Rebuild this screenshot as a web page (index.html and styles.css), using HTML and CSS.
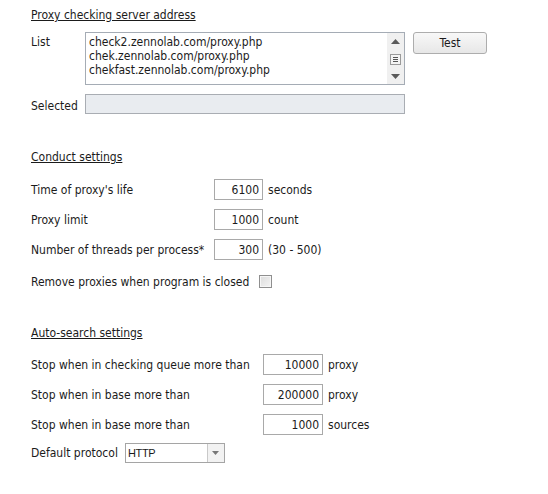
FILE: index.html
```html
<!DOCTYPE html>
<html lang="en">
<head>
    <meta charset="UTF-8">
    <title>Proxy settings</title>
<link rel="stylesheet" href="styles.css">
</head>
<body>
    <div class="sec sec1">
        <div class="head">Proxy checking server address</div>
        <div class="row-list">
            <span class="lbl lbl1">List</span>
            <div class="listbox">
                <div class="items">
                    <div>check2.zennolab.com/proxy.php</div>
                    <div>chek.zennolab.com/proxy.php</div>
                    <div>chekfast.zennolab.com/proxy.php</div>
                </div>
                <div class="sbar">
                    <svg width="9" height="5" viewBox="0 0 9 5"><path d="M0 5 L4.5 0 L9 5 Z" fill="#5a5a5a"/></svg>
                    <div class="thumb"><i></i><i></i><i></i></div>
                    <svg width="9" height="5" viewBox="0 0 9 5"><path d="M0 0 L4.5 5 L9 0 Z" fill="#5a5a5a"/></svg>
                </div>
            </div>
            <button class="btn">Test</button>
        </div>
        <div class="row-sel">
            <span class="lbl lbl1">Selected</span>
            <div class="selbox"></div>
        </div>
    </div>

    <div class="sec sec2">
        <div class="head">Conduct settings</div>
        <div class="row">
            <span class="lbl lbl2">Time of proxy's life</span>
            <div class="num n2">6100</div>
            <span class="unit">seconds</span>
        </div>
        <div class="row">
            <span class="lbl lbl2">Proxy limit</span>
            <div class="num n2">1000</div>
            <span class="unit">count</span>
        </div>
        <div class="row">
            <span class="lbl lbl2">Number of threads per process*</span>
            <div class="num n2">300</div>
            <span class="unit">(30 - 500)</span>
        </div>
        <div class="row row-chk">
            <span class="lbl">Remove proxies when program is closed</span>
            <span class="chk"></span>
        </div>
    </div>

    <div class="sec sec3">
        <div class="head">Auto-search settings</div>
        <div class="row">
            <span class="lbl lbl3">Stop when in checking queue more than</span>
            <div class="num n3">10000</div>
            <span class="unit">proxy</span>
        </div>
        <div class="row">
            <span class="lbl lbl3">Stop when in base more than</span>
            <div class="num n3">200000</div>
            <span class="unit">proxy</span>
        </div>
        <div class="row">
            <span class="lbl lbl3">Stop when in base more than</span>
            <div class="num n3">1000</div>
            <span class="unit">sources</span>
        </div>
        <div class="row row-proto">
            <span class="lbl">Default protocol</span>
            <div class="combo">
                <span class="cval">HTTP</span>
                <span class="cbtn"><svg width="7" height="4" viewBox="0 0 7 4"><path d="M0 0 L3.5 4 L7 0 Z" fill="#777"/></svg></span>
            </div>
        </div>
    </div>
</body>
</html>
```

FILE: styles.css
```css
*{
    margin:0;
    padding:0;
    box-sizing:border-box;
}
body{
    width:548px;
    height:494px;
    background:#fff;
    color:#1b1b1b;
    font-family:"DejaVu Sans Condensed","DejaVu Sans",sans-serif;
    font-size:12px;
    line-height:14px;
    padding-left:31px;
}
.head{
    text-decoration:underline;
    height:14px;
}
.sec1{
    padding-top:8px;
}
.row-list{
    display:flex;
    align-items:flex-start;
    margin-top:10px;
}
.lbl{
    white-space:nowrap;
}
.lbl1{
    width:54px;
    padding-top:3px;
}
.listbox{
    width:320px;
    height:53px;
    border:1px solid #a5acb5;
    display:flex;
}
.items{
    flex:1;
    padding:2px 0 0 3px;
    line-height:14px;
}
.sbar{
    width:17px;
    background:#f0f0f0;
    display:flex;
    flex-direction:column;
    align-items:center;
    justify-content:space-between;
    padding:6px 0 5px;
}
.thumb{
    width:11px;
    height:11px;
    border:1px solid #9a9a9a;
    background:#f4f4f4;
    display:flex;
    flex-direction:column;
    justify-content:center;
    align-items:center;
    gap:1px;
}
.thumb i{
    display:block;
    width:5px;
    height:1px;
    background:#555;
}
.btn{
    margin-left:8px;
    width:74px;
    height:22px;
    border:1px solid #adadad;
    border-radius:3px;
    background:linear-gradient(#f8f8f8,#e7e7e7);
    font:inherit;
    color:#1b1b1b;
}
.row-sel{
    display:flex;
    align-items:center;
    margin-top:9px;
}
.selbox{
    width:320px;
    height:20px;
    border:1px solid #a9adb3;
    background:#e9ecf0;
}
.sec2{
    margin-top:36px;
}
.row{
    display:flex;
    align-items:center;
    height:21px;
    margin-top:9px;
}
.sec2 .head + .row{
    margin-top:15px;
}
.lbl2{
    width:183px;
}
.lbl3{
    width:232px;
}
.num{
    height:21px;
    border:1px solid #a9a9a9;
    text-align:right;
    padding:3px 3px 0 0;
}
.n2{
    width:49px;
}
.n3{
    width:60px;
}
.unit{
    margin-left:5px;
}
.row-chk{
    margin-top:15px;
    height:13px;
}
.chk{
    width:13px;
    height:13px;
    margin-left:10px;
    border:1px solid #8f8f8f;
    background:linear-gradient(135deg,#dcdcdc,#f4f4f4);
    box-shadow:inset 0 0 0 1px #f6f6f6;
}
.sec3{
    margin-top:38px;
}
.sec3 .head + .row{
    margin-top:14px;
}
.row-proto{
    margin-top:8px;
    height:20px;
}
.combo{
    margin-left:7px;
    width:100px;
    height:20px;
    border:1px solid #a5a5a5;
    display:flex;
}
.cval{
    flex:1;
    padding:2px 0 0 2px;
    font-family:"Liberation Sans",sans-serif;
    font-size:11px;
    letter-spacing:-0.3px;
}
.cbtn{
    width:17px;
    border-left:1px solid #c9c9c9;
    background:#f2f2f2;
    display:flex;
    align-items:center;
    justify-content:center;
}
```
